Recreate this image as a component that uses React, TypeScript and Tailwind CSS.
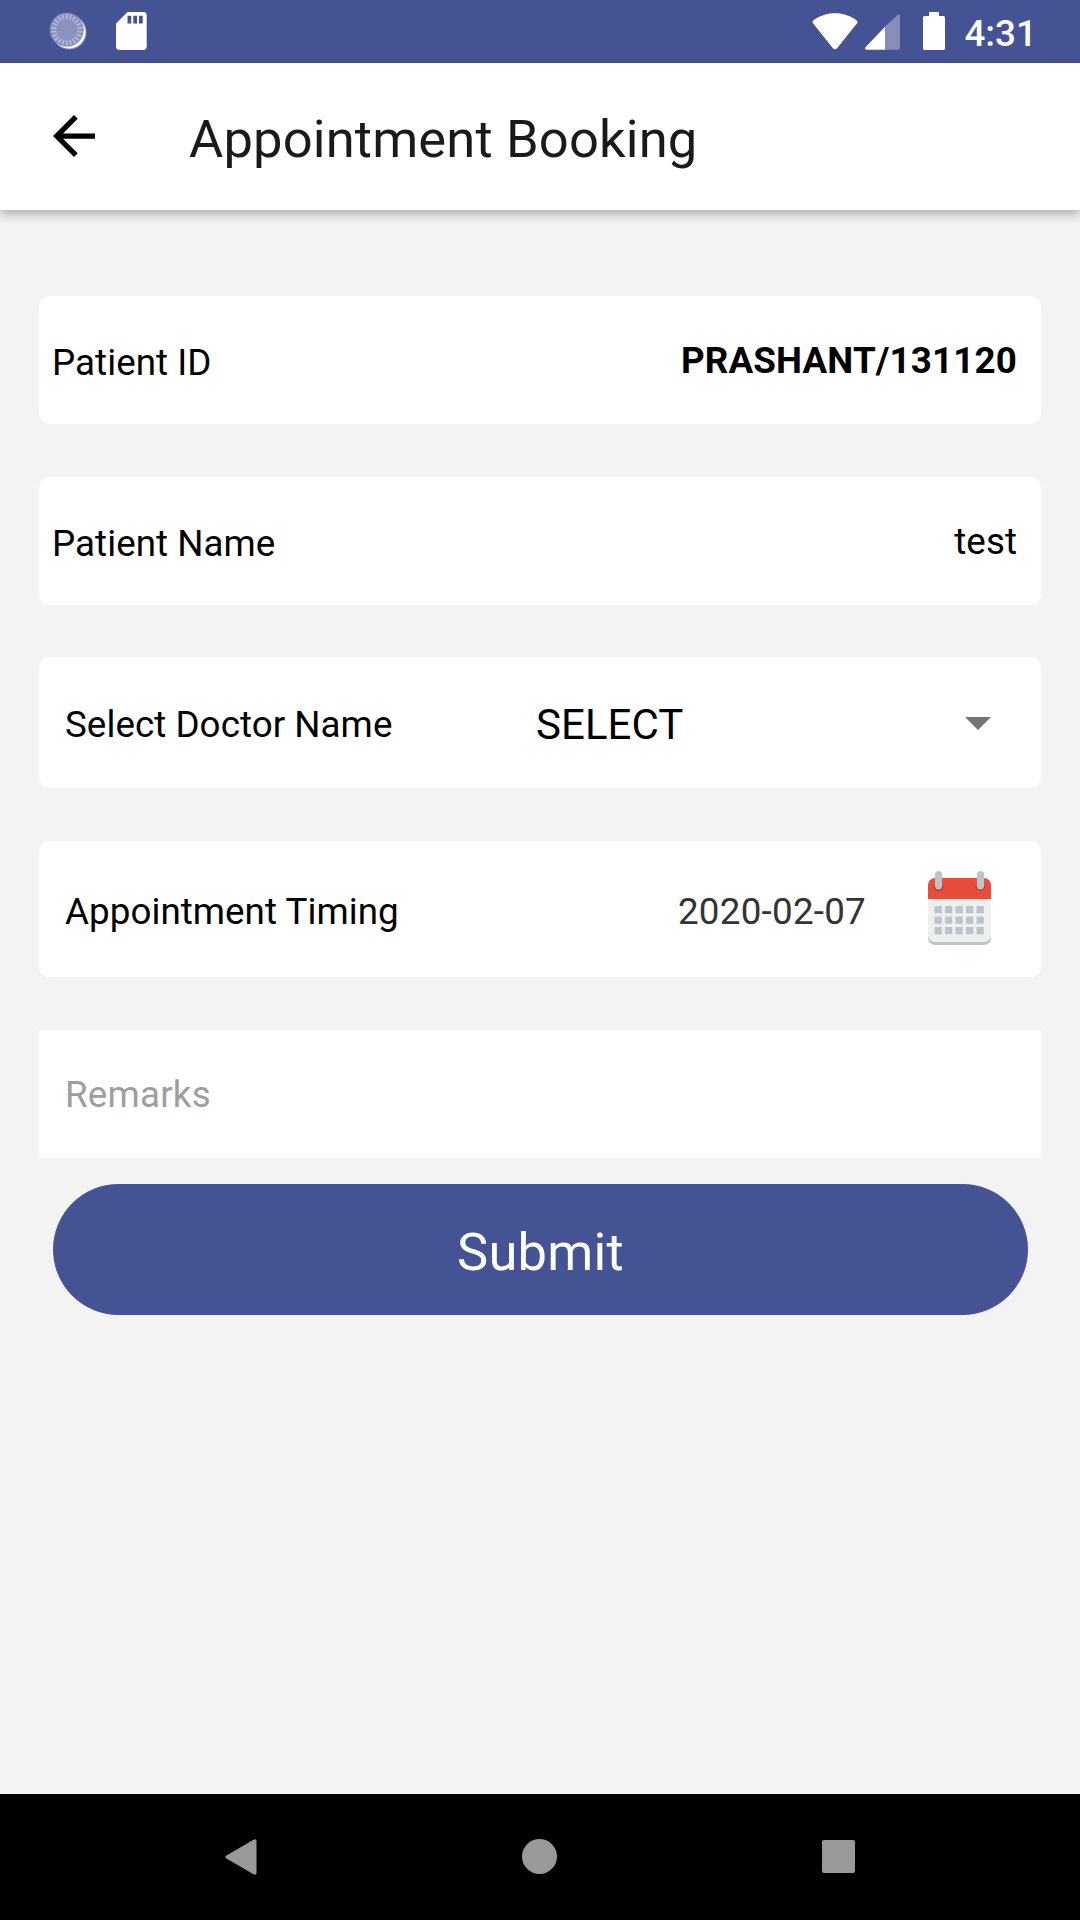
import React, { useState } from 'react';

const DATE_ROWS = [35, 45.5, 56];
const DATE_COLS = [6.5, 17, 27.5, 38, 48.5];
const TICKS = Array.from({ length: 22 }, (_, i) => (i * 360) / 22);

const SyncIcon = () => (
  <svg className="w-[38px] h-[38px]" viewBox="0 0 38 38">
    <circle cx="20.3" cy="20.3" r="17.3" fill="#fff" opacity="0.35" />
    <circle cx="20" cy="20" r="16.6" fill="#fff" />
    <circle cx="17.8" cy="17.8" r="17" fill="#8a92c2" />
    {TICKS.map((angle) => (
      <path key={angle} d="M17.8 2.2v5" stroke="#b4b9d8" strokeWidth="1.7" transform={`rotate(${angle} 17.8 17.8)`} />
    ))}
  </svg>
);

const SdCardIcon = () => (
  <svg className="w-[31px] h-[38px]" viewBox="0 0 31 38">
    <path
      fill="#fff"
      fillRule="evenodd"
      d="M11.5 0H27.3a3.4 3.4 0 0 1 3.4 3.4V34.6a3.4 3.4 0 0 1-3.4 3.4H3.4A3.4 3.4 0 0 1 0 34.6V11.5ZM11.5 3.8v7.8h3.7V3.8ZM17.3 3.8v7.8H21V3.8ZM23 3.8v7.8h3.7V3.8Z"
    />
  </svg>
);

const WifiIcon = () => (
  <svg className="w-[46px] h-[37px]" viewBox="0 0 46 37">
    <path
      fill="#fff"
      d="M23 0.3C14.6 0.3 7.2 2.9 1.2 7.5Q0 8.7 1 10.2L20.9 35.2Q23 37.2 25.1 35.2L45 10.2Q46 8.7 44.8 7.5C38.8 2.9 31.4 0.3 23 0.3Z"
    />
  </svg>
);

const SignalIcon = () => (
  <svg className="w-[35px] h-[36px]" viewBox="0 0 35 36">
    <path fill="#fff" opacity="0.35" d="M20 12.8L32.6 0.9Q35 -0.6 35 2V33.6Q35 35.7 33 35.7H20Z" />
    <path fill="#fff" d="M20 12.8V35.7H1.6Q-1 35.4 0.7 32.9Z" />
  </svg>
);

const BatteryIcon = () => (
  <svg className="w-[22px] h-[38px]" viewBox="0 0 22 38">
    <path fill="#fff" d="M6 0h10v4h4.5A1.5 1.5 0 0 1 22 5.5v31a1.5 1.5 0 0 1-1.5 1.5h-19A1.5 1.5 0 0 1 0 36.5V5.5A1.5 1.5 0 0 1 1.5 4H6Z" />
  </svg>
);

const BackIcon = () => (
  <svg className="w-[42px] h-[42px]" viewBox="4 4 16 16">
    <path d="M20 11H7.83l5.59-5.59L12 4l-8 8 8 8 1.41-1.41L7.83 13H20v-2z" />
  </svg>
);

const CalendarIcon = () => (
  <svg className="w-[63px] h-[74px]" viewBox="0 0 63 74">
    <path fill="#bdc3c7" d="M0 60H63V67a7 7 0 0 1-7 7H7a7 7 0 0 1-7-7Z" />
    <path fill="#ecf0f1" d="M0 27H63V64a7 7 0 0 1-7 7H7a7 7 0 0 1-7-7Z" />
    <path fill="#e74c3c" d="M0 28V14a7 7 0 0 1 7-7H56a7 7 0 0 1 7 7V28Z" />
    <path fill="#c0392b" d="M5.5 15a5 5 0 1 0 10 0ZM47.5 15a5 5 0 1 0 10 0Z" />
    <rect x="7" y="0" width="7" height="18.5" rx="3.5" fill="#bdc3c7" />
    <rect x="49" y="0" width="7" height="18.5" rx="3.5" fill="#bdc3c7" />
    {DATE_ROWS.map((y) =>
      DATE_COLS.map((x) => <rect key={`${x}-${y}`} x={x} y={y} width="7.3" height="7.3" fill="#bdc3c7" />)
    )}
  </svg>
);

const StatusBar = () => (
  <div className="h-[63px] shrink-0 bg-[#455294] flex items-start justify-between pl-[49px] pr-[43px] pt-[12px]">
    <div className="flex items-start gap-[29px]">
      <SyncIcon />
      <SdCardIcon />
    </div>
    <div className="flex items-start">
      <div className="pt-[1px]"><WifiIcon /></div>
      <div className="pt-[2px] ml-[7px]"><SignalIcon /></div>
      <div className="ml-[23px]"><BatteryIcon /></div>
      <span className="ml-[19px] text-[36.75px] leading-[43px] font-medium text-white">4:31</span>
    </div>
  </div>
);

const NavBar = () => (
  <nav className="h-[126px] shrink-0 bg-black flex items-center justify-between px-[225px] pb-[1px]">
    <svg className="w-[32px] h-[38px]" viewBox="0 0 32 38">
      <path fill="#999" d="M1 17.8L28.5 1.7Q31.5 0.3 31.5 3V35Q31.5 37.7 28.5 36.3L1 20.2Q-0.4 19 1 17.8Z" />
    </svg>
    <div className="w-[35px] h-[35px] rounded-full bg-[#999]" />
    <div className="w-[33px] h-[33px] rounded-[2px] bg-[#999]" />
  </nav>
);

export default function App() {
  const [remarks, setRemarks] = useState('');

  return (
    <div className="w-[1080px] h-[1920px] flex flex-col bg-[#f3f3f3] text-black text-[36.75px] leading-[44px] tracking-[0.05px] font-['Roboto',sans-serif]">
      <StatusBar />

      <header className="h-[147px] shrink-0 bg-white flex items-center pl-[53px] pb-[1px] shadow-[0_4px_10px_rgba(0,0,0,0.3)]">
        <button aria-label="Back"><BackIcon /></button>
        <h1 className="ml-[94px] pt-[5px] text-[52.5px] leading-[62px] tracking-[0.15px] text-[#1a1a1a]">Appointment Booking</h1>
      </header>

      <main className="flex-1 flex flex-col px-[39px] pt-[86px]">
        <div className="h-[128px] rounded-[11px] bg-white flex items-center justify-between pl-[13px] pr-[24px] pt-[2px]">
          <span className="pt-[4px]">Patient ID</span>
          <span className="font-bold tracking-[0.15px]">PRASHANT/131120</span>
        </div>

        <div className="h-[128px] mt-[53px] rounded-[11px] bg-white flex items-center justify-between pl-[13px] pr-[24px] pt-[2px]">
          <span className="pt-[4px]">Patient Name</span>
          <span>test</span>
        </div>

        <div className="h-[131px] mt-[52px] rounded-[11px] bg-white flex items-center pl-[26px] pr-[50.5px]">
          <span className="w-[471px] pt-[4px]">Select Doctor Name</span>
          <span className="flex-1 pt-[4px] text-[42px] leading-[50px]">SELECT</span>
          <svg className="w-[26px] h-[13px] mt-[2px]" viewBox="0 0 26 13">
            <path fill="#757575" d="M0 0h26L13 13z" />
          </svg>
        </div>

        <div className="h-[136px] mt-[53px] rounded-[11px] bg-white flex items-center pl-[26px] pr-[50.5px]">
          <span className="flex-1 pt-[5px]">Appointment Timing</span>
          <span className="pt-[5px] mr-[61.5px] tracking-[0.25px] text-[#333]">2020-02-07</span>
          <div className="pb-[2px]"><CalendarIcon /></div>
        </div>

        <input
          value={remarks}
          onChange={(e) => setRemarks(e.target.value)}
          placeholder="Remarks"
          className="h-[128px] mt-[53px] bg-white pl-[26px] tracking-[0.2px] outline-none placeholder:text-[#9e9e9e]"
        />

        <button className="h-[131px] mt-[26px] ml-[14px] mr-[13px] rounded-full bg-[#455294] text-white text-[52.5px] leading-[62px] tracking-[0.2px] pt-[5px]">
          Submit
        </button>
      </main>

      <NavBar />
    </div>
  );
}
